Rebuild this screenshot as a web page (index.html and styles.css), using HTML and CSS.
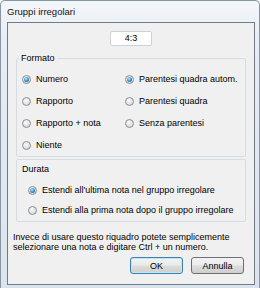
FILE: index.html
```html
<!DOCTYPE html>
<html>
	<head>
		<meta charset="UTF-8">
		<title>Gruppi irregolari</title>
		<link rel="stylesheet" href="styles.css">
	</head>
	<body>
		<div class="window">
			<div class="titlebar">Gruppi irregolari</div>
			<div class="client">
				<div class="ratio-row"><div class="ratio">4:3</div></div>

				<fieldset class="group">
					<legend>Formato</legend>
					<div class="options">
						<div class="radio on"><span class="dot"></span>Numero</div>
						<div class="radio on"><span class="dot"></span>Parentesi quadra autom.</div>
						<div class="radio"><span class="dot"></span>Rapporto</div>
						<div class="radio"><span class="dot"></span>Parentesi quadra</div>
						<div class="radio"><span class="dot"></span>Rapporto + nota</div>
						<div class="radio"><span class="dot"></span>Senza parentesi</div>
						<div class="radio"><span class="dot"></span>Niente</div>
					</div>
				</fieldset>

				<div class="group durata">
					<div class="group-title">Durata</div>
					<div class="radio on"><span class="dot"></span>Estendi all'ultima nota nel gruppo irregolare</div>
					<div class="radio"><span class="dot"></span>Estendi alla prima nota dopo il gruppo irregolare</div>
				</div>

				<p class="hint">Invece di usare questo riquadro potete semplicemente selezionare una nota e digitare Ctrl + un numero.</p>

				<div class="buttons">
					<button class="btn default">OK</button>
					<button class="btn">Annulla</button>
				</div>
			</div>
		</div>
	</body>
</html>
```

FILE: styles.css
```css
body { margin: 0; font-family: "Liberation Sans", Arial, sans-serif; font-size: 9px; color: #000; }

.window { width: 260px; height: 288px; box-sizing: border-box; display: flex; flex-direction: column;
	padding: 0 4px 3px 6px; border: 1px solid #8696a6; border-bottom: none; border-radius: 5px 5px 0 0;
	background: linear-gradient(to bottom, #f4f7fa, #e6edf3 40px, #dbe4ec); }
.titlebar { height: 21px; display: flex; align-items: center; font-size: 9.5px; color: #111; }

.client { flex: 1; background: #f0f0f0; border: 1px solid #6e7b88; display: flex; flex-direction: column; }

.ratio-row { display: flex; padding: 8px 0 0 102px; }
.ratio { width: 40px; height: 13px; line-height: 13px; text-align: center; background: #fff;
	border: 1px solid #c9d2da; border-radius: 2px; }

.group { margin: 0 8px 0 8px; border: 1px solid #d5dde3; border-radius: 2px; }
fieldset.group { margin-top: 7px; padding: 4px 0 0 5px; }
legend { padding: 0 2px; margin-left: -3px; line-height: 11px; }

.options { display: grid; grid-template-columns: 103px 1fr; grid-auto-rows: 22px; }

.radio { display: flex; align-items: center; gap: 5px; white-space: nowrap; }
.dot { width: 9px; height: 9px; border-radius: 50%; border: 1px solid #8b8f93; box-sizing: border-box;
	background: radial-gradient(circle at 40% 35%, #fbfbfb, #dcdcdc 70%, #cfcfcf); display: flex; align-items: center; justify-content: center; }
.radio.on .dot::after { content: ""; width: 5px; height: 5px; border-radius: 50%;
	background: radial-gradient(circle at 40% 35%, #b8e4ff, #2d8fd3 55%, #14558c); }

.durata { margin-top: 2px; height: 63px; box-sizing: border-box; padding: 4px 0 0 11px; }
.group-title { line-height: 11px; margin: 0 0 5px -6px; }
.durata .radio { height: 20px; }

.hint { margin: 10px 0 0 5px; line-height: 10px; }

.buttons { display: flex; justify-content: flex-end; gap: 8px; padding: 0 10px 0 0; margin-top: auto; margin-bottom: 10px; }
.btn { width: 53px; height: 17px; padding: 0; font: inherit; color: #000; border: 1px solid #707070; border-radius: 3px;
	background: linear-gradient(to bottom, #f2f2f2, #ebebeb 48%, #dddddd 52%, #cfcfcf); }
.btn.default { border-color: #3c7fb1; box-shadow: inset 0 0 0 1px #bfe6f9; }
```
